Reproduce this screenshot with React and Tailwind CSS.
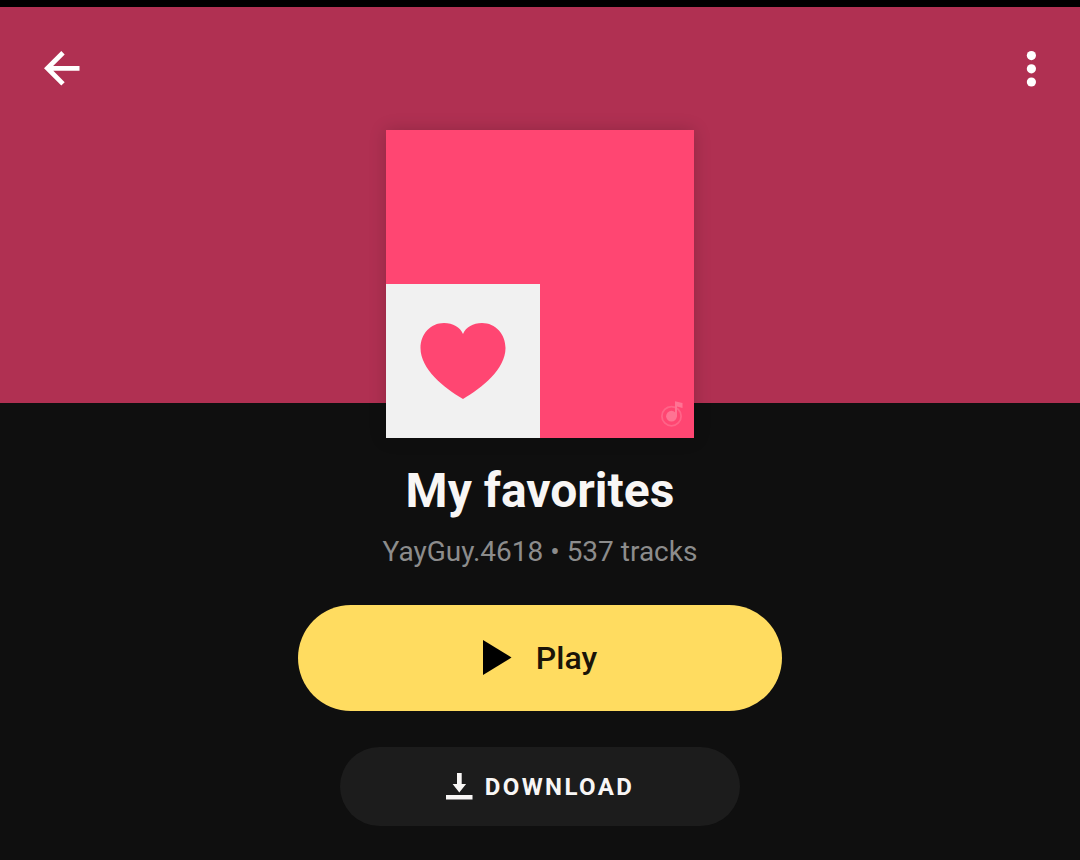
import { useState } from "react";

const playlist = {
  title: "My favorites",
  owner: "YayGuy.4618",
  trackCount: 537,
};

function BackIcon() {
  return (
    <svg className="size-9" viewBox="0 0 36 36" fill="none" stroke="currentColor" strokeWidth="4.8" aria-hidden="true">
      <path d="M19 1.7 3.4 17.3 19 32.9M3.4 17.3H35.5" />
    </svg>
  );
}

function MoreIcon() {
  return (
    <svg className="size-9" viewBox="0 0 36 36" fill="currentColor" aria-hidden="true">
      <circle cx="18.4" cy="4.6" r="4.6" />
      <circle cx="18.4" cy="17.8" r="4.6" />
      <circle cx="18.4" cy="31" r="4.6" />
    </svg>
  );
}

function HeartIcon() {
  return (
    <svg className="h-[76px] w-[86px] text-[#ff4672]" viewBox="0 0 86 76" fill="currentColor" aria-hidden="true">
      <path d="M43 76C24 65 0.500 46 0.500 25C0.500 11 10.500 0 24 0C33 0 40 4 43 11C46 4 53 0 62 0C75.500 0 85.500 11 85.500 25C85.500 46 62 65 43 76Z" />
    </svg>
  );
}

function NoteLogo() {
  return (
    <svg className="absolute right-2.5 bottom-2.5 h-7 w-6" viewBox="0 0 24 28" fill="none" aria-hidden="true">
      <circle cx="11.5" cy="16.2" r="9.6" stroke="#ff6488" strokeWidth="1.8" />
      <circle cx="11.5" cy="16.2" r="5.4" fill="#ff7393" />
      <path d="M15 16.2V1.2L22.5 3V8L17 6.500V16.2Z" fill="#ff7393" />
    </svg>
  );
}

function PlayIcon() {
  return (
    <svg className="h-9 w-[29px]" viewBox="0 0 29 36" fill="#000" aria-hidden="true">
      <path d="M0 0 28.5 17.5 0 35Z" />
    </svg>
  );
}

function DownloadIcon() {
  return (
    <svg className="h-[27px] w-[27px]" viewBox="0 0 27 27" fill="currentColor" aria-hidden="true">
      <path d="M11 0H15.7V11H20.1L13.3 19.6 6.6 11H11ZM0 22H26.5V26.6H0Z" />
    </svg>
  );
}

function Cover() {
  return (
    <div className="relative flex size-[308px] shrink-0 items-end bg-[#ff4672] shadow-[0_0_16px_rgba(0,0,0,0.18)]">
      <div className="flex size-[154px] items-center justify-center bg-[#f1f1f1]">
        <HeartIcon />
      </div>
      <NoteLogo />
    </div>
  );
}

export default function App() {
  const [playing, setPlaying] = useState(false);

  return (
    <main className="min-h-screen border-t-[7px] border-black bg-[#0f0f0f] font-['Roboto',sans-serif] text-[#f8f6f5]">
      <header className="bg-[#b03052]">
        <div className="flex h-[123px] items-center justify-between pr-[31px] pl-11 text-white">
          <button type="button" aria-label="Back">
            <BackIcon />
          </button>
          <button type="button" aria-label="More options">
            <MoreIcon />
          </button>
        </div>
        {/* shorter than the cover, which hangs over the header's lower edge */}
        <div className="flex h-[273px] items-start justify-center">
          <Cover />
        </div>
      </header>

      <section className="flex flex-col items-center pt-[60px] pb-8">
        <h1 className="text-[48px] leading-14 font-bold">{playlist.title}</h1>
        <p className="mt-[15px] text-[28px] leading-9 text-[#8c8c8c]">
          {playlist.owner} • {playlist.trackCount} tracks
        </p>

        <button
          type="button"
          aria-pressed={playing}
          onClick={() => setPlaying(!playing)}
          className="mt-[35px] flex h-[106px] w-[484px] max-w-full items-center justify-center gap-6 rounded-full bg-[#ffdc60] text-[32px] leading-10 font-medium text-[#1a1408]"
        >
          <PlayIcon />
          Play
        </button>

        <button
          type="button"
          className="mt-9 flex h-[79px] w-[400px] max-w-full items-center justify-center gap-3 rounded-full bg-[#1c1c1c] text-[24px] leading-8 font-bold tracking-widest"
        >
          <DownloadIcon />
          DOWNLOAD
        </button>
      </section>
    </main>
  );
}
